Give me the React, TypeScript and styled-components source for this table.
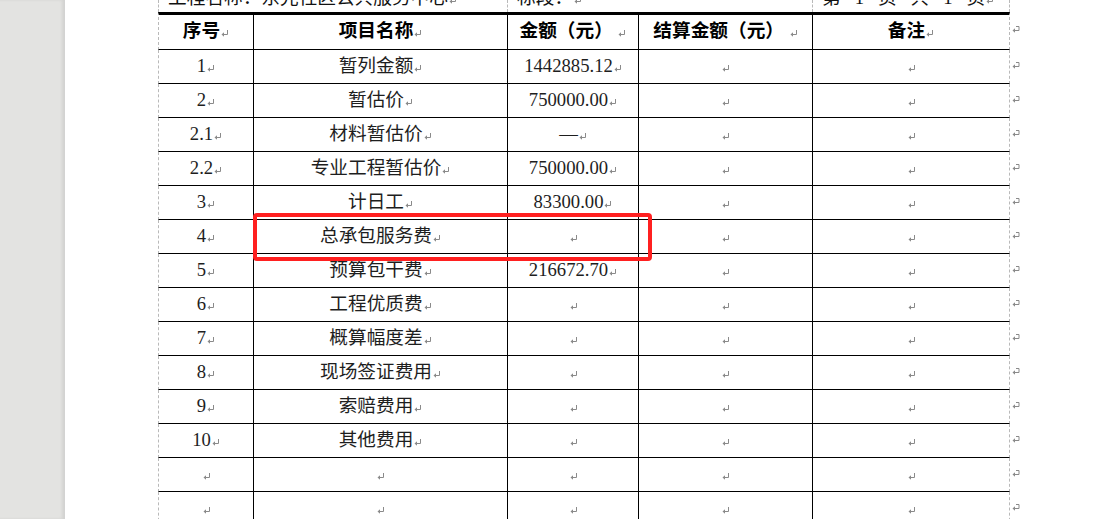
import React from "react";
import styled, { createGlobalStyle } from "styled-components";

const GlobalStyle = createGlobalStyle`
  html, body { margin: 0; padding: 0; background: #ffffff; }
  body { width: 1101px; height: 519px; overflow: hidden; }
`;

const FONT = `"Liberation Serif", "Noto Sans CJK SC", serif`;
const GRID = "#b9b9b9";
const COLS = "96px 254px 131px 174px 197px 14px";

const Page = styled.div`
  display: flex;
  width: 1101px;
  height: 519px;
  overflow: hidden;
  font-family: ${FONT};
  font-size: 18.67px;
  color: #1e1e1e;
`;

const Gutter = styled.div`
  width: 65px;
  flex: none;
  background: #e3e3e1;
  box-shadow: inset -3px 0 3px rgba(0, 0, 0, 0.07);
`;

const Sheet = styled.div`
  flex: 1;
  background: #ffffff;
  padding-left: 93px;
`;

const Table = styled.div`
  position: relative;
  display: flex;
  flex-direction: column;
  width: 866px;
`;

const TitleRow = styled.div`
  display: grid;
  grid-template-columns: 350px 305px 197px;
  height: 12px;
  overflow: hidden;
`;

const TitleCell = styled.div<{ $first?: boolean }>`
  box-sizing: border-box;
  display: flex;
  align-items: flex-start;
  padding-left: 9px;
  border-right: 1px dashed ${GRID};
  border-left: ${(p) => (p.$first ? `1px dashed ${GRID}` : "none")};
`;

const TitleText = styled.span`
  flex: none;
  line-height: 20px;
  margin-top: -12px;
  white-space: pre;
  color: #111;
`;

const Row = styled.div<{ $header?: boolean }>`
  display: grid;
  grid-template-columns: ${COLS};
  height: ${(p) => (p.$header ? 38 : 34)}px;
  flex: none;
`;

const Cell = styled.div<{ $header?: boolean; $first?: boolean; $last?: boolean }>`
  box-sizing: border-box;
  display: flex;
  align-items: center;
  justify-content: center;
  line-height: 20px;
  padding-bottom: ${(p) => (p.$header ? 3 : 1)}px;
  white-space: nowrap;
  border-top: ${(p) => (p.$header ? "3px solid #000" : "none")};
  border-bottom: 1px solid #000;
  border-left: ${(p) => (p.$first ? `1px dashed ${GRID}` : "none")};
  border-right: ${(p) => (p.$last ? `1px dashed ${GRID}` : "1px solid #000")};
  font-weight: ${(p) => (p.$header ? 700 : 400)};
  color: ${(p) => (p.$header ? "#000" : "#1e1e1e")};
`;

const EndCell = styled.div`
  display: flex;
  align-items: center;
  padding: 0 0 5px 1px;
`;

const MarkSvg = styled.svg`
  width: 8px;
  height: 8px;
  margin-left: 1px;
  vertical-align: 0;
  flex: none;
`;

const Highlight = styled.div`
  position: absolute;
  left: 95px;
  top: 213px;
  width: 399px;
  height: 48px;
  box-sizing: border-box;
  border: 4px solid #ff2020;
  border-radius: 4px;
  pointer-events: none;
`;

const Mark = () => (
  <MarkSvg viewBox="0 0 8 8">
    <path d="M6.5 1 V5.5 H2.5" fill="none" stroke="#8a8a8a" strokeWidth="1" />
    <path d="M0.5 5.5 L3 3.2 L3 7.8 Z" fill="#8a8a8a" />
  </MarkSvg>
);

const EndMark = () => (
  <MarkSvg viewBox="0 0 8 8">
    <path d="M4 1.5 H7 V5.5 H2.5" fill="none" stroke="#8a8a8a" strokeWidth="1" />
    <path d="M0.5 5.5 L3 3.2 L3 7.8 Z" fill="#8a8a8a" />
  </MarkSvg>
);

const header = ["序号", "项目名称", "金额（元）", "结算金额（元）", "备注"];

const rows: string[][] = [
  ["1", "暂列金额", "1442885.12", "", ""],
  ["2", "暂估价", "750000.00", "", ""],
  ["2.1", "材料暂估价", "—", "", ""],
  ["2.2", "专业工程暂估价", "750000.00", "", ""],
  ["3", "计日工", "83300.00", "", ""],
  ["4", "总承包服务费", "", "", ""],
  ["5", "预算包干费", "216672.70", "", ""],
  ["6", "工程优质费", "", "", ""],
  ["7", "概算幅度差", "", "", ""],
  ["8", "现场签证费用", "", "", ""],
  ["9", "索赔费用", "", "", ""],
  ["10", "其他费用", "", "", ""],
  ["", "", "", "", ""],
  ["", "", "", "", ""],
];

const DataRow = ({ cells, isHeader }: { cells: string[]; isHeader?: boolean }) => (
  <Row $header={isHeader}>
    {cells.map((c, i) => (
      <Cell key={i} $header={isHeader} $first={i === 0} $last={i === cells.length - 1}>
        <span>
          {c}
          {c !== "" && (isHeader && c.endsWith("）") ? " " : "")}
          <Mark />
        </span>
      </Cell>
    ))}
    <EndCell>
      <EndMark />
    </EndCell>
  </Row>
);

export default function App() {
  return (
    <>
      <GlobalStyle />
      <Page>
        <Gutter />
        <Sheet>
          <Table>
            <TitleRow>
              <TitleCell $first>
                <TitleText>
                  工程名称：东光社区公共服务中心
                  <Mark />
                </TitleText>
              </TitleCell>
              <TitleCell>
                <TitleText>
                  标段：
                  <Mark />
                </TitleText>
              </TitleCell>
              <TitleCell>
                <TitleText>
                  {"第   1   页   共   1   页"}
                  <Mark />
                </TitleText>
              </TitleCell>
            </TitleRow>
            <DataRow cells={header} isHeader />
            {rows.map((r, i) => (
              <DataRow key={i} cells={r} />
            ))}
            <Highlight />
          </Table>
        </Sheet>
      </Page>
    </>
  );
}
